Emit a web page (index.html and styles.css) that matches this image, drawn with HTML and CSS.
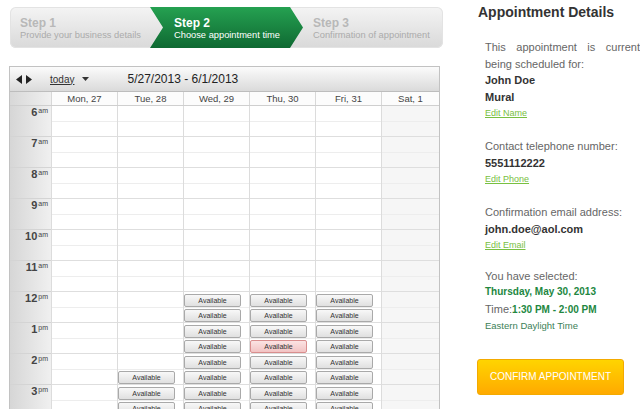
FILE: index.html
```html
<!DOCTYPE html>
<html>
<head>
<meta charset="utf-8">
<title>Schedule appointment</title>
<link rel="stylesheet" href="styles.css">
</head>
<body>
<div class="page">
  <div class="main">
    <div class="steps">
      <div class="step step1">
        <div class="step-title">Step 1</div>
        <div class="step-sub">Provide your business details</div>
      </div>
      <div class="step step2">
        <div class="step-title">Step 2</div>
        <div class="step-sub">Choose appointment time</div>
      </div>
      <div class="step step3">
        <div class="step-title">Step 3</div>
        <div class="step-sub">Confirmation of appointment</div>
      </div>
    </div>

    <div class="cal">
      <div class="cal-toolbar">
        <svg class="arrow" width="6" height="9" viewBox="0 0 6 9"><polygon points="6,0 6,9 0,4.5"/></svg>
        <svg class="arrow next" width="6" height="9" viewBox="0 0 6 9"><polygon points="0,0 0,9 6,4.5"/></svg>
        <a class="today">today</a>
        <svg class="caret" width="7" height="4" viewBox="0 0 7 4"><polygon points="0,0 7,0 3.5,4"/></svg>
        <span class="range">5/27/2013 - 6/1/2013</span>
      </div>
      <div class="cal-grid cal-head">
        <div class="corner"></div>
        <div class="dh">Mon, 27</div>
        <div class="dh">Tue, 28</div>
        <div class="dh">Wed, 29</div>
        <div class="dh">Thu, 30</div>
        <div class="dh">Fri, 31</div>
        <div class="dh">Sat, 1</div>
      </div>
      <div class="cal-grid cal-body">
        <div class="times">
          <div class="t">6<sup>am</sup></div>
          <div class="t">7<sup>am</sup></div>
          <div class="t">8<sup>am</sup></div>
          <div class="t">9<sup>am</sup></div>
          <div class="t">10<sup>am</sup></div>
          <div class="t">11<sup>am</sup></div>
          <div class="t">12<sup>pm</sup></div>
          <div class="t">1<sup>pm</sup></div>
          <div class="t">2<sup>pm</sup></div>
          <div class="t">3<sup>pm</sup></div>
          <div class="t">4<sup>pm</sup></div>
        </div>
        <div class="day"></div>
        <div class="day">
          <div class="skip8"></div>
          <div class="hr"><div class="slot"></div><div class="btn">Available</div></div>
          <div class="hr"><div class="btn">Available</div><div class="btn">Available</div></div>
          <div class="hr"><div class="btn">Available</div><div class="btn">Available</div></div>
        </div>
        <div class="day">
          <div class="skip6"></div>
          <div class="hr"><div class="btn">Available</div><div class="btn">Available</div></div>
          <div class="hr"><div class="btn">Available</div><div class="btn">Available</div></div>
          <div class="hr"><div class="btn">Available</div><div class="btn">Available</div></div>
          <div class="hr"><div class="btn">Available</div><div class="btn">Available</div></div>
          <div class="hr"><div class="btn">Available</div><div class="btn">Available</div></div>
        </div>
        <div class="day">
          <div class="skip6"></div>
          <div class="hr"><div class="btn">Available</div><div class="btn">Available</div></div>
          <div class="hr"><div class="btn">Available</div><div class="btn selected">Available</div></div>
          <div class="hr"><div class="btn">Available</div><div class="btn">Available</div></div>
          <div class="hr"><div class="btn">Available</div><div class="btn">Available</div></div>
          <div class="hr"><div class="btn">Available</div><div class="btn">Available</div></div>
        </div>
        <div class="day">
          <div class="skip6"></div>
          <div class="hr"><div class="btn">Available</div><div class="btn">Available</div></div>
          <div class="hr"><div class="btn">Available</div><div class="btn">Available</div></div>
          <div class="hr"><div class="btn">Available</div><div class="btn">Available</div></div>
          <div class="hr"><div class="btn">Available</div><div class="btn">Available</div></div>
          <div class="hr"><div class="btn">Available</div><div class="btn">Available</div></div>
        </div>
        <div class="day weekend"></div>
      </div>
    </div>
  </div>

  <aside class="details">
    <h2>Appointment Details</h2>
    <div class="info">
      <div class="grp first">
        <p class="intro">This appointment is currently being scheduled for:</p>
        <div class="strong">John Doe</div>
        <div class="strong">Mural</div>
        <a class="edit">Edit Name</a>
      </div>
      <div class="grp">
        <div>Contact telephone number:</div>
        <div class="strong">5551112222</div>
        <a class="edit">Edit Phone</a>
      </div>
      <div class="grp">
        <div>Confirmation email address:</div>
        <div class="strong">john.doe@aol.com</div>
        <a class="edit">Edit Email</a>
      </div>
      <div class="grp sel">
        <div>You have selected:</div>
        <div class="sel-date">Thursday, May 30, 2013</div>
        <div class="sel-time">Time:<span class="val">1:30 PM - 2:00 PM</span></div>
        <div class="tz">Eastern Daylight Time</div>
      </div>
    </div>
    <button class="confirm">CONFIRM APPOINTMENT</button>
  </aside>
</div>
</body>
</html>
```

FILE: styles.css
```css
html, body {
  margin: 0;
  overflow: hidden;
  background: #fff;
}
body {
  font-family: "Liberation Sans", Arial, sans-serif;
}
.page {
  display: flex;
  padding: 7px 0 0 9px;
}
.main {
  width: 434px;
  flex: none;
}

/* Steps */
.steps {
  display: flex;
  width: 433px;
  height: 41px;
  margin-left: 1px;
  border-radius: 6px;
  overflow: hidden;
  background: linear-gradient(#f4f4f4, #d9d9d9);
  box-shadow: inset 0 0 0 1px #e3e3e3;
}
.step {
  box-sizing: border-box;
  padding-top: 8.5px;
  white-space: nowrap;
}
.step1 {
  width: 140px;
  padding-left: 10px;
}
.step2 {
  width: 153px;
  padding-left: 24px;
  background: linear-gradient(#25a151, #0f6932);
  clip-path: polygon(0 0, 140px 0, 153px 50%, 140px 100%, 0 100%, 13px 50%);
}
.step3 {
  flex: 1;
  padding-left: 10px;
}
.step-title {
  font-size: 12px;
  line-height: 14px;
  font-weight: bold;
  color: #b8b8b8;
}
.step-sub {
  font-size: 9.3px;
  line-height: 11px;
  color: #ababab;
}
.step2 .step-title,
.step2 .step-sub {
  color: #fff;
}

/* Calendar */
.cal {
  margin-top: 18px;
  width: 431px;
  box-sizing: border-box;
  border: 1px solid #c2c2c2;
  border-bottom: none;
}
.cal-toolbar {
  height: 24px;
  display: flex;
  align-items: center;
  padding-left: 6px;
  border-bottom: 1px solid #bdbdbd;
  background: linear-gradient(#fbfbfb, #dadada);
}
.arrow {
  fill: #222;
  display: block;
}
.arrow.next {
  margin-left: 4px;
}
.today {
  margin-left: 18px;
  font-size: 10px;
  color: #333;
  text-decoration: underline;
}
.caret {
  margin-left: 8px;
  fill: #333;
  display: block;
}
.range {
  margin-left: 38px;
  font-size: 12px;
  color: #222;
}
.cal-grid {
  display: grid;
  grid-template-columns: 41px repeat(5, 66px) 58px;
}
.cal-head {
  height: 14px;
  box-sizing: border-box;
  border-bottom: 1px solid #cfcfcf;
  background: #fcfcfc;
}
.corner {
  background: linear-gradient(to right, #d8d8d8, #f0f0f0);
}
.dh {
  border-left: 1px solid #d8d8d8;
  text-align: center;
  font-size: 9.5px;
  line-height: 13px;
  color: #444;
}
.times {
  background: linear-gradient(to right, #d6d6d6, #f0f0f0);
}
.t {
  height: 31px;
  box-sizing: border-box;
  border-bottom: 1px solid #d4d4d4;
  text-align: right;
  padding: 1px 3px 0 0;
  font-size: 11px;
  line-height: 11px;
  font-weight: bold;
  color: #444;
}
.t sup {
  font-size: 7px;
  font-weight: normal;
  vertical-align: top;
  line-height: 8px;
  margin-left: 1px;
}
.day {
  border-left: 1px solid #dcdcdc;
  background: repeating-linear-gradient(to bottom,
    transparent 0 15px, #ededed 15px 16px,
    transparent 16px 30px, #dedede 30px 31px);
}
.day.weekend {
  background-color: #f6f6f6;
}
.skip6 { height: 186px; }
.skip8 { height: 248px; }
.hr {
  height: 31px;
  box-sizing: border-box;
  padding-top: 2px;
  display: flex;
  flex-direction: column;
  gap: 2px;
}
.slot { height: 13px; }
.btn {
  width: 57px;
  height: 13px;
  box-sizing: border-box;
  border: 1px solid #a9a9a9;
  border-radius: 2px;
  background: linear-gradient(#f8f8f8, #e0e0e0);
  font-size: 7px;
  line-height: 11px;
  text-align: center;
  color: #333;
}
.btn.selected {
  border-color: #d98e8e;
  background: linear-gradient(#fbe3e3, #f2c3c3);
}

/* Details */
.details {
  width: 176px;
  flex: none;
  margin-left: 34px;
  margin-top: -3px;
  font-size: 11px;
  line-height: 16.5px;
  color: #666;
}
.details h2 {
  margin: 0 0 0 1px;
  font-size: 14px;
  line-height: 17px;
  font-weight: bold;
  color: #333;
}
.info {
  padding-left: 8px;
  width: 163px;
}
.grp { margin-top: 16.5px; }
.grp.first { margin-top: 18px; }
.grp.sel { margin-top: 14px; }
.intro {
  margin: 0;
  text-align: justify;
}
.strong {
  font-weight: bold;
  color: #333;
}
.edit {
  display: block;
  font-size: 9px;
  color: #78c041;
  text-decoration: underline;
}
.sel-date {
  font-size: 10px;
  font-weight: bold;
  color: #22873f;
}
.sel-time .val {
  font-size: 10px;
  font-weight: bold;
  color: #22873f;
}
.tz {
  font-size: 9.5px;
  color: #3c7f57;
}
.confirm {
  display: block;
  margin-top: 24px;
  width: 147px;
  height: 36px;
  padding: 0;
  border: 1px solid #f3aa00;
  border-radius: 3px;
  background: linear-gradient(#ffd400, #ffaa00);
  color: #fff;
  font-family: "Liberation Sans", Arial, sans-serif;
  font-size: 10px;
}
```
